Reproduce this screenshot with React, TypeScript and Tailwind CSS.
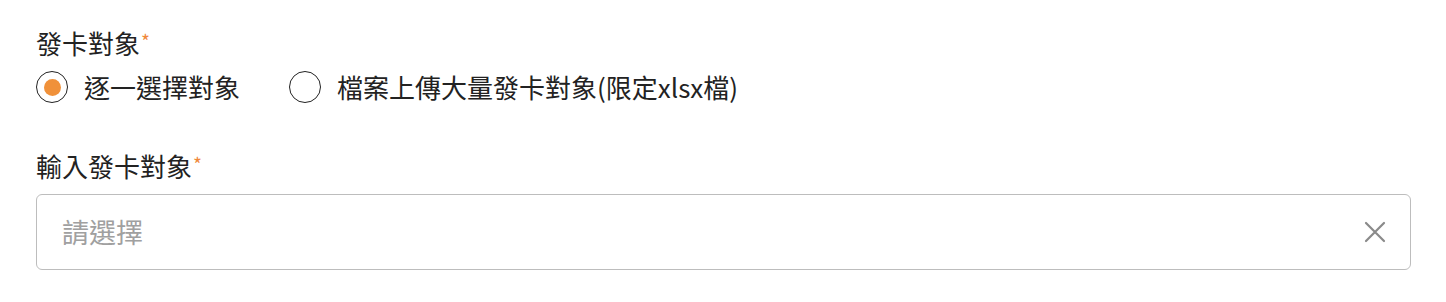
import { useState } from "react";

const App = () => {
  const [mode, setMode] = useState("single");

  return (
    <div className="w-[1446px] h-[302px] bg-white px-9 pt-[25px] text-[#222] [font-family:'Noto_Sans_CJK_TC','Noto_Sans',sans-serif]">
      {/* 發卡對象 */}
      <div className="text-[26px] leading-[36px] flex items-start">
        發卡對象<span className="text-[#f0883a] text-[19px] leading-[24px] ml-[1px] mt-[4px]">*</span>
      </div>
      <div className="flex items-center mt-[8px] h-[36px]">
        <label className="flex items-center cursor-pointer" onClick={() => setMode("single")}>
          <span className="w-8 h-8 rounded-full border-[1.5px] border-[#222] flex items-center justify-center">
            {mode === "single" && <span className="w-[17px] h-[17px] rounded-full bg-[#f0913a]" />}
          </span>
          <span className="ml-4 text-[26px] leading-[36px]">逐一選擇對象</span>
        </label>
        <label className="flex items-center cursor-pointer ml-[49px]" onClick={() => setMode("file")}>
          <span className="w-8 h-8 rounded-full border-[1.5px] border-[#222] flex items-center justify-center">
            {mode === "file" && <span className="w-[17px] h-[17px] rounded-full bg-[#f0913a]" />}
          </span>
          <span className="ml-4 text-[26px] leading-[36px]">檔案上傳大量發卡對象(限定xlsx檔)</span>
        </label>
      </div>

      {/* 輸入發卡對象 */}
      <div className="text-[26px] leading-[36px] flex items-start mt-[43px]">
        輸入發卡對象<span className="text-[#f0883a] text-[19px] leading-[24px] ml-[1px] mt-[4px]">*</span>
      </div>
      <div className="mt-[10px] w-[1375px] h-[76px] border border-[#bdbdbd] rounded-[6px] flex items-center pl-[25px] pr-[24px]">
        <input
          className="flex-1 outline-none text-[27px] placeholder:text-[#a0a0a0] bg-transparent"
          placeholder="請選擇"
        />
        <svg width="22" height="22" viewBox="0 0 22 22" className="text-[#8a8a8a]">
          <path d="M2 2L20 20M20 2L2 20" stroke="currentColor" strokeWidth="2.2" strokeLinecap="round" />
        </svg>
      </div>
    </div>
  );
};

export default App;
